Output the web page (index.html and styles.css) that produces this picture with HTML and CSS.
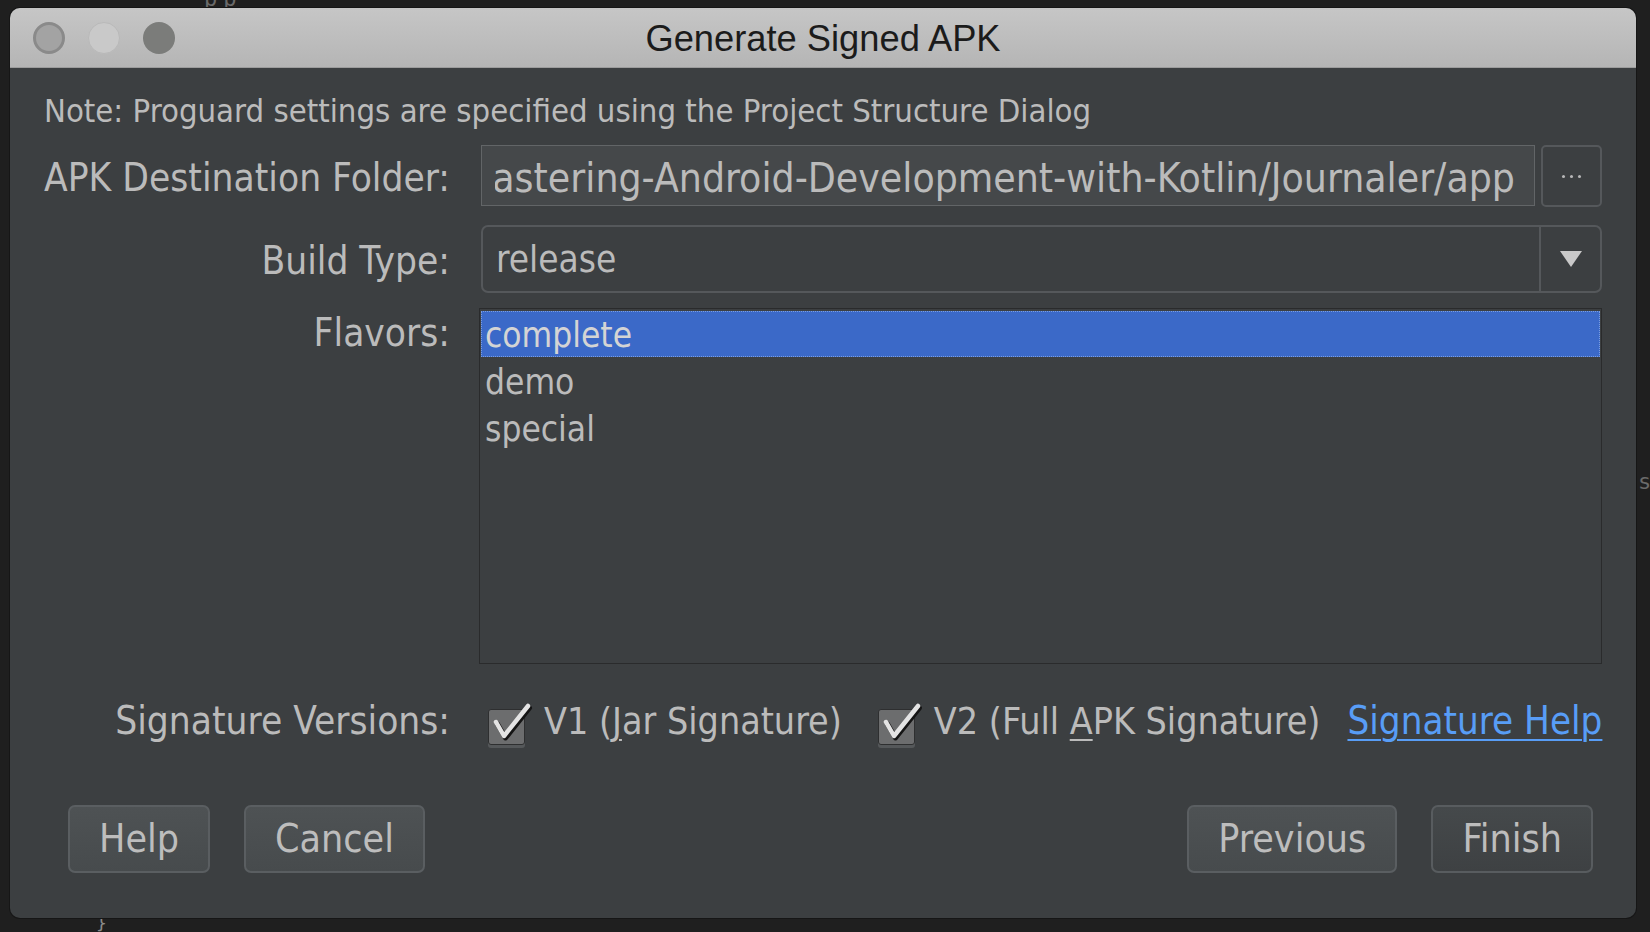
FILE: index.html
```html
<!DOCTYPE html>
<html>
<head>
<meta charset="utf-8">
<title>Generate Signed APK</title>
<link rel="stylesheet" href="styles.css">
</head>
<body>
<div class="desktop">
  <span class="bg-glyph g-top">pp</span>
  <span class="bg-glyph g-right">s</span>
  <span class="bg-glyph g-bottom">}</span>
  <div class="window">
    <div class="titlebar">
      <div class="lights">
        <span class="light l1"></span>
        <span class="light l2"></span>
        <span class="light l3"></span>
      </div>
      <div class="title">Generate Signed APK</div>
      <div class="spacer"></div>
    </div>
    <div class="content">
      <div class="note">Note: Proguard settings are specified using the Project Structure Dialog</div>

      <div class="row row-dest">
        <div class="label">APK Destination Folder:</div>
        <div class="field-group">
          <div class="textfield">
            <div class="tf-clip"><span class="tf-text">/Users/milosvasic/Projects/Mastering-Android-Development-with-Kotlin/Journaler/app</span></div>
          </div>
          <div class="browse"><span class="dot"></span><span class="dot"></span><span class="dot"></span></div>
        </div>
      </div>

      <div class="row row-build">
        <div class="label">Build Type:</div>
        <div class="combo">
          <div class="combo-value">release</div>
          <div class="combo-arrow">
            <svg width="22" height="16" viewBox="0 0 22 16"><polygon points="0,0 22,0 11,16" fill="#c9c9c9"/></svg>
          </div>
        </div>
      </div>

      <div class="row row-flavors">
        <div class="label label-top">Flavors:</div>
        <div class="list">
          <div class="item selected">complete</div>
          <div class="item">demo</div>
          <div class="item">special</div>
        </div>
      </div>

      <div class="row row-sig">
        <div class="label">Signature Versions:</div>
        <div class="sig-group">
          <div class="check">
            <span class="box">
              <svg class="tick" width="46" height="44" viewBox="0 0 46 44"><polyline points="7,19 15,33 39,3" fill="none" stroke="#151515" stroke-width="5" stroke-linecap="round" stroke-linejoin="round" transform="translate(1.5,2)"/><polyline points="7,19 15,33 39,3" fill="none" stroke="#e4e4e4" stroke-width="4.5" stroke-linecap="round" stroke-linejoin="round"/></svg>
            </span>
            <span class="check-text">V1 (<span class="mn">J</span>ar Signature)</span>
          </div>
          <div class="check check2">
            <span class="box">
              <svg class="tick" width="46" height="44" viewBox="0 0 46 44"><polyline points="7,19 15,33 39,3" fill="none" stroke="#151515" stroke-width="5" stroke-linecap="round" stroke-linejoin="round" transform="translate(1.5,2)"/><polyline points="7,19 15,33 39,3" fill="none" stroke="#e4e4e4" stroke-width="4.5" stroke-linecap="round" stroke-linejoin="round"/></svg>
            </span>
            <span class="check-text">V2 (Full <span class="mn">A</span>PK Signature)</span>
          </div>
          <a class="link" href="#">Signature Help</a>
        </div>
      </div>

      <div class="buttons">
        <div class="btn-group">
          <button class="btn">Help</button>
          <button class="btn">Cancel</button>
        </div>
        <div class="btn-group">
          <button class="btn">Previous</button>
          <button class="btn btn-default">Finish</button>
        </div>
      </div>
    </div>
  </div>
</div>
</body>
</html>
```
FILE: styles.css
```css
html, body {
  margin: 0;
  padding: 0;
  background: #1f1f1f;
}

.desktop {
  position: relative;
  width: 1650px;
  height: 932px;
  box-sizing: border-box;
  padding: 8px 14px 14px 10px;
  overflow: hidden;
  font-family: "DejaVu Sans Condensed", "DejaVu Sans", sans-serif;
  font-stretch: condensed;
}

.bg-glyph {
  position: absolute;
  color: #6a6a6a;
  font-family: "DejaVu Sans Mono", monospace;
  font-stretch: normal;
  font-size: 22px;
  line-height: 22px;
}
.g-top { left: 204px; top: -12px; letter-spacing: 6px; }
.g-right { left: 1638px; top: 471px; }
.g-bottom { left: 96px; top: 912px; font-size: 18px; color: #8a8a8a; }

.window {
  position: relative;
  height: 100%;
  display: flex;
  flex-direction: column;
  border-radius: 10px;
  overflow: hidden;
  background: #3c3f41;
  box-shadow: 0 0 0 1px #161616;
}

/* ---------- title bar ---------- */
.titlebar {
  height: 60px;
  flex: none;
  display: grid;
  grid-template-columns: 1fr auto 1fr;
  align-items: center;
  background: linear-gradient(#c6c6c6, #b5b5b5);
  border-bottom: 1px solid #9c9c9c;
  box-sizing: border-box;
}
.lights {
  display: flex;
  gap: 23px;
  padding-left: 23px;
}
.light {
  width: 32px;
  height: 32px;
  border-radius: 50%;
  box-sizing: border-box;
}
.l1 { background: #a3a3a3; border: 3px solid #8a8a8a; }
.l2 { background: #c9c9c9; border: 1px solid #b9b9b9; }
.l3 { background: #7b7c7a; }

.title {
  font-family: "Liberation Sans", Arial, sans-serif;
  font-stretch: normal;
  font-size: 36.3px;
  color: #1b1b1b;
  padding-top: 3px;
}

/* ---------- content ---------- */
.content {
  flex: 1;
  display: flex;
  flex-direction: column;
  padding: 21px 34px 45px 34px;
  color: #bbbbbb;
}

.note {
  font-size: 32.6px;
  line-height: 44px;
  height: 40px;
  white-space: nowrap;
}

.row {
  display: grid;
  grid-template-columns: 406px minmax(0, 1fr);
  column-gap: 31px;
  align-items: center;
}
.row-dest { margin-top: 16px; height: 61px; }
.row-build { margin-top: 19px; height: 68px; }
.row-flavors { margin-top: 15px; height: 356px; align-items: start; }
.row-sig { margin-top: 35px; height: 40px; }

.label {
  text-align: right;
  font-size: 38.5px;
  line-height: 44px;
  padding-top: 4px;
  white-space: nowrap;
}
.label-top { padding-top: 3px; }

/* text field */
.field-group {
  display: flex;
  height: 61px;
  gap: 6px;
  min-width: 0;
}
.textfield {
  flex: 1;
  display: flex;
  align-items: center;
  background: #45484a;
  border: 1px solid #626567;
  box-sizing: border-box;
  padding: 4px 19px 0 13px;
  min-width: 0;
}
.tf-clip {
  flex: 1;
  display: flex;
  justify-content: flex-end;
  overflow: hidden;
  min-width: 0;
}
.tf-text {
  flex: none;
  white-space: nowrap;
  font-size: 40.5px;
  line-height: 50px;
}
.browse {
  flex: none;
  width: 61px;
  height: 62px;
  box-sizing: border-box;
  border: 2px solid #55585b;
  border-radius: 5px;
  display: flex;
  align-items: center;
  justify-content: center;
  gap: 5px;
}
.dot {
  width: 3px;
  height: 3px;
  background: #b8b8b8;
  border-radius: 50%;
}

/* combo */
.combo {
  height: 68px;
  display: flex;
  box-sizing: border-box;
  border: 2px solid #55585b;
  border-radius: 7px;
}
.combo-value {
  flex: 1;
  display: flex;
  align-items: center;
  padding-left: 13px;
  padding-top: 1px;
  font-size: 36.7px;
}
.combo-arrow {
  width: 59px;
  display: flex;
  align-items: center;
  justify-content: center;
  border-left: 2px solid #55585b;
}

/* list */
.list {
  margin-left: -2px;
  height: 356px;
  box-sizing: border-box;
  border: 1px solid #2a2b2c;
  padding: 2px 1px;
}
.item {
  height: 47px;
  line-height: 42px;
  padding-top: 4px;
  padding-left: 4px;
  font-size: 35px;
  box-sizing: border-box;
}
.item.selected {
  height: 46px;
  line-height: 40px;
  padding-top: 3px;
  background: #3b69c8;
  color: #d4d4d4;
  border: 1px dotted #7b9ee0;
  padding-left: 3px;
}

/* signature row */
.sig-group {
  display: flex;
  align-items: center;
  padding-left: 7px;
}
.check {
  display: flex;
  align-items: center;
  gap: 19px;
}
.check2 { margin-left: 36px; }
.box {
  position: relative;
  flex: none;
  width: 37px;
  height: 36px;
  box-sizing: border-box;
  border: 1px solid #2e2f30;
  border-radius: 3px;
  background: #6c6d6e;
  box-shadow: 0 3px 0 #55585a;
}
.tick {
  position: absolute;
  left: 0;
  top: -7px;
}
.check-text {
  font-size: 37.3px;
  line-height: 44px;
  white-space: nowrap;
  margin-bottom: 12px;
}
.row-sig .label { padding-top: 0; margin-bottom: 12px; }
.mn { text-decoration: underline; text-underline-offset: 5px; text-decoration-thickness: 2px; }
.link {
  margin-left: 27px;
  margin-bottom: 12px;
  font-size: 38.2px;
  line-height: 44px;
  color: #589df6;
  text-decoration: underline;
  text-underline-offset: 5px;
  text-decoration-thickness: 2px;
  white-space: nowrap;
}

/* buttons */
.buttons {
  margin-top: 66px;
  display: flex;
  justify-content: space-between;
  padding: 0 9px 0 24px;
}
.btn-group {
  display: flex;
  gap: 34px;
}
.btn {
  height: 68px;
  padding: 0 29px 2px;
  font-family: inherit;
  font-stretch: inherit;
  font-size: 39px;
  color: #bdbdbd;
  background: linear-gradient(#4e5254, #474b4d);
  border: 2px solid #5a5e61;
  border-radius: 7px;
  box-sizing: border-box;
}
.btn-default {
  background: linear-gradient(#45494b, #3e4143);
  border-color: #585c5f;
}
```
